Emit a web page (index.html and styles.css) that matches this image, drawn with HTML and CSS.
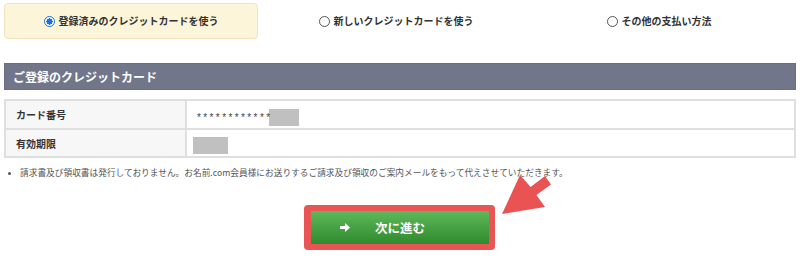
FILE: index.html
```html
<!DOCTYPE html>
<html lang="ja">
<head>
<meta charset="utf-8">
<title>お支払い方法</title>
<link rel="stylesheet" href="styles.css">
</head>
<body>
<div class="page">
  <div class="tabs">
    <div class="tab tab-active"><span class="radio radio-on"></span><span class="tab-label">登録済みのクレジットカードを使う</span></div>
    <div class="tab"><span class="radio"></span><span class="tab-label">新しいクレジットカードを使う</span></div>
    <div class="tab"><span class="radio"></span><span class="tab-label">その他の支払い方法</span></div>
  </div>

  <h2 class="section-title">ご登録のクレジットカード</h2>

  <table class="card-table">
    <tr>
      <th>カード番号</th>
      <td><span class="stars">************</span><span class="mask mask-num"></span></td>
    </tr>
    <tr>
      <th>有効期限</th>
      <td><span class="mask mask-exp"></span></td>
    </tr>
  </table>

  <ul class="notes">
    <li>請求書及び領収書は発行しておりません。お名前.com会員様にお送りするご請求及び領収のご案内メールをもって代えさせていただきます。</li>
  </ul>

  <div class="actions">
    <div class="highlight">
      <button class="next-btn" type="button">
        <svg class="next-icon" width="10" height="9" viewBox="0 0 10 9"><polygon points="0,3 5,3 5,0 10,4.5 5,9 5,6 0,6" fill="#fff"/></svg>
        <span>次に進む</span>
      </button>
    </div>
  </div>

  <svg class="pointer" width="800" height="269" viewBox="0 0 800 269">
    <polygon points="502,214 520,175 530.6,187 545,176 551,184.5 536.4,195 545,207" fill="#e95353"/>
  </svg>
</div>
</body>
</html>
```

FILE: styles.css
```css
html, body {
  margin: 0;
  padding: 0;
  background: #fff;
}
body {
  font-family: "Noto Sans CJK JP", "Noto Sans", sans-serif;
  color: #333;
}
.page {
  position: relative;
  width: 800px;
  height: 269px;
  box-sizing: border-box;
  padding: 3px 4px 0;
}
.tabs {
  display: grid;
  grid-template-columns: 254px 276px 250px;
  height: 36px;
}
.tab {
  display: flex;
  align-items: center;
  justify-content: center;
  gap: 4px;
  font-size: 10px;
  font-weight: 700;
  color: #333;
  border-radius: 4px;
}
.tab-active {
  background: #fdf5da;
  border: 1px solid #f1e4bd;
  box-sizing: border-box;
}
.tab-label {
  line-height: 1;
}
.radio {
  width: 11px;
  height: 11px;
  box-sizing: border-box;
  border-radius: 50%;
  border: 1px solid #555;
  background: #fff;
  flex: none;
}
.radio-on {
  border: 1.5px solid #1a6fe0;
  background: radial-gradient(circle, #1a6fe0 0 3px, #fff 3.2px);
}
.section-title {
  margin: 24px 0 0;
  height: 27px;
  box-sizing: border-box;
  background: #72768a;
  border: 1px solid #6a6e82;
  color: #fff;
  font-size: 12px;
  font-weight: 700;
  line-height: 25px;
  padding-left: 8px;
}
.card-table {
  margin-top: 9px;
  width: 100%;
  border-collapse: collapse;
  border: 2px solid #dfdfdf;
}
.card-table th,
.card-table td {
  border: 2px solid #dfdfdf;
  height: 28px;
  box-sizing: border-box;
  padding: 0;
  vertical-align: middle;
}
.card-table tr:first-child th,
.card-table tr:first-child td {
  height: 29px;
}
.card-table th {
  width: 181px;
  background: #f7f7f7;
  text-align: left;
  font-size: 10px;
  font-weight: 700;
  color: #333;
  padding-left: 10px;
}
.card-table td {
  background: #fff;
  padding-left: 5px;
}
.card-table td > * {
  vertical-align: middle;
}
.stars {
  display: inline-block;
  font-family: "Liberation Sans", sans-serif;
  font-size: 10px;
  letter-spacing: 2.4px;
  color: #444;
  margin-left: 5px;
  line-height: 10px;
  position: relative;
  top: 1px;
}
.mask {
  display: inline-block;
  height: 17px;
  background: #c0c0c0;
}
.mask-num {
  width: 30px;
  margin-left: -4px;
}
.mask-exp {
  width: 35px;
  margin-left: 1px;
}
.notes {
  margin: 9px 0 0;
  padding: 0 0 0 16px;
  font-size: 8.7px;
  color: #555;
  line-height: 12px;
}
.notes li::marker {
  font-size: 7px;
}
.actions {
  display: flex;
  justify-content: center;
  margin-top: 26px;
}
.highlight {
  background: #e95454;
  border-radius: 4px;
  padding: 6px 6px 6px 7px;
  margin-left: -1px;
}
.next-btn {
  width: 178px;
  height: 33px;
  border: 0;
  margin: 0;
  display: flex;
  align-items: center;
  background: linear-gradient(#5fb95a, #2e8a2e);
  color: #fff;
  font-family: "Noto Sans CJK JP", sans-serif;
  font-size: 12.5px;
  font-weight: 700;
  padding: 0 0 0 29px;
  gap: 25px;
  cursor: pointer;
}
.next-icon {
  flex: none;
}
.pointer {
  position: absolute;
  left: 0;
  top: 0;
  pointer-events: none;
}
```
